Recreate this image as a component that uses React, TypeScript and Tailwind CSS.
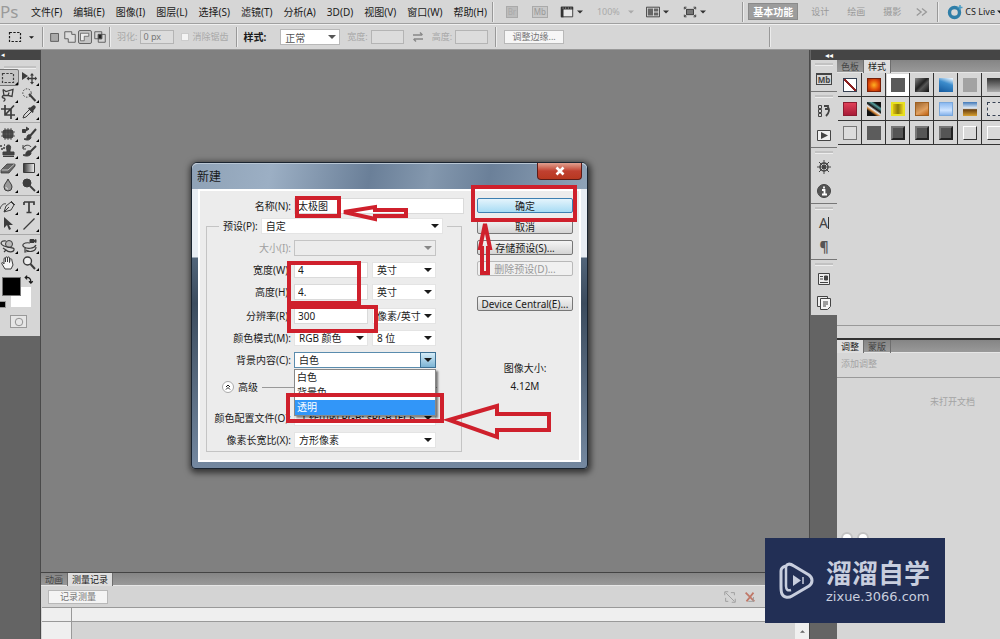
import React from "react";
import clsx from "clsx";

const MENUS = [
  "文件(F)",
  "编辑(E)",
  "图像(I)",
  "图层(L)",
  "选择(S)",
  "滤镜(T)",
  "分析(A)",
  "3D(D)",
  "视图(V)",
  "窗口(W)",
  "帮助(H)",
];

const WORKSPACES = ["设计", "绘画", "摄影"];

const STYLES = [
  "border border-gray-700 bg-[linear-gradient(45deg,#fff_44%,#8c2020_45%,#8c2020_55%,#fff_56%)]",
  "border border-[#7a2008] bg-[radial-gradient(#ffb020,#e04a08_60%,#a02804)]",
  "bg-[#5a5a5a] outline-4 outline-white",
  "bg-[linear-gradient(135deg,#888,#222_45%,#555_60%,#111)]",
  "bg-[linear-gradient(200deg,#e8f4ff_5%,#3c8ccc_40%,#14589c)]",
  "bg-[#a2a2a2]",
  "bg-[linear-gradient(#333,#aaa)]",
  "border border-[#8c1c30] bg-[linear-gradient(#e04058,#a81c38)]",
  "bg-[linear-gradient(35deg,#111_25%,#d08030_35%,#eee_45%,#111_55%,#58a0a0_70%,#111_80%)]",
  "border-2 border-[#e8e020] bg-[linear-gradient(90deg,#e0c010,#8a7a08_50%,#e8d020)]",
  "border border-[#a06020] bg-[linear-gradient(150deg,#a06830,#e0a060_60%,#c06010)]",
  "border border-[#7aa8dc] bg-[linear-gradient(#8ab8f0,#cfe4ff_60%,#88b4ec)]",
  "bg-[linear-gradient(#4078b8,#e8f0f8_45%,#6a4010_55%,#d8a030)]",
  "border border-dashed border-gray-700 bg-[#ddd]",
  "border border-[#777] bg-[#dcdcdc]",
  "bg-[#5c5c5c]",
  "bg-[#555] border-2 border-t-[#777] border-l-[#777] border-b-[#222] border-r-[#222]",
  "bg-[#555] border-2 border-t-[#777] border-l-[#777] border-b-[#222] border-r-[#222]",
  "bg-[#555] border-2 border-t-[#777] border-l-[#777] border-b-[#222] border-r-[#222]",
  "bg-[#dadada] border border-t-white border-l-white border-b-[#333] border-r-[#333]",
  "bg-[#dadada] border border-t-white border-l-white border-b-[#333] border-r-[#333]",
];

type IconProps = { children: React.ReactNode; className?: string };

const Icon = ({ children, className = "size-4" }: IconProps) => (
  <svg
    viewBox="0 0 16 16"
    fill="none"
    stroke="currentColor"
    className={clsx("shrink-0", className)}
    aria-hidden="true"
  >
    {children}
  </svg>
);

const Caret = ({ className = "w-2 h-1" }: { className?: string }) => (
  <svg viewBox="0 0 8 4" className={clsx("shrink-0 fill-current", className)}>
    <path d="M0 0h8L4 4z" />
  </svg>
);

const MarqueeIcon = () => (
  <Icon>
    <path d="M2.5 3.5h11v9h-11z" strokeDasharray="2.4 1.4" strokeWidth="1.2" />
  </Icon>
);

const TOOL_GROUPS: { name: string; icon: React.ReactNode; active?: boolean }[][] = [
  [
    { name: "矩形选框工具", icon: <MarqueeIcon />, active: true },
    {
      name: "移动工具",
      icon: (
        <Icon>
          <path d="M1 2v8l6-4z" fill="currentColor" stroke="none" />
          <path d="M11 4v9M6.5 8.5h9" strokeWidth="1.3" />
          <path d="M11 3l2 2.500h-4zM11 14.500l2-2.500h-4zM5.500 8.500L8 6.500v4zM16 8.500l-2-2v4z" fill="currentColor" stroke="none" />
        </Icon>
      ),
    },
    {
      name: "套索工具",
      icon: (
        <Icon>
          <path d="M3 2.500l3 2 7-2-1 7-4-1 1-3M3 2.500l1 6 4 0M4 8.500c-2 0-2.500 2-.5 2.500s2 2 0 3.500" strokeWidth="1.3" />
        </Icon>
      ),
    },
    {
      name: "快速选择工具",
      icon: (
        <Icon>
          <circle cx="6" cy="6" r="4.2" strokeDasharray="1.5 1.5" />
          <path d="M8 7l6.500 7" strokeWidth="2" />
        </Icon>
      ),
    },
    {
      name: "裁剪工具",
      icon: (
        <Icon>
          <path d="M5 1v10h10M1 5h10v10M5 11l9-9.500" strokeWidth="1.7" />
        </Icon>
      ),
    },
    {
      name: "吸管工具",
      icon: (
        <Icon>
          <path d="M2 14l1-3 6-6 2 2-6 6z" />
          <path d="M8 3.500l1.500 0L12 1.500c1.500-1 3.500 1 2.500 2.500L12.500 6.500v1.500l-1 1L7 4.500z" fill="currentColor" stroke="none" />
        </Icon>
      ),
    },
  ],
  [
    {
      name: "修复工具",
      icon: (
        <Icon>
          <rect x="3" y="4" width="10" height="8" rx="2" fill="#555" />
          <path d="M5 2v12M8 2v12M11 2v12M1 6h14M1 10h14" strokeWidth="0.8" />
        </Icon>
      ),
    },
    {
      name: "画笔工具",
      icon: (
        <Icon>
          <path d="M1.500 3.500h3v3h-3zM5 1l3 2-3 2" fill="currentColor" />
          <path d="M15 3l-6 7" strokeWidth="2" />
          <path d="M9 9c-2-1-3 1-3 2s-1 2-3 2c3 2 7 1 7-2z" fill="currentColor" />
        </Icon>
      ),
    },
    {
      name: "仿制图章工具",
      icon: (
        <Icon>
          <path d="M7 7c-1-2-1-5 1.500-5S11 5 10 7v2h4v3H3V9h4zM3 13.500h11" fill="#444" />
          <path d="M0 3h2M3 5h2M1 6h2M4 2h1" strokeWidth="1.5" />
        </Icon>
      ),
    },
    {
      name: "历史画笔工具",
      icon: (
        <Icon>
          <path d="M2 5c2-4 7-3 8-1M2 2v4h3" />
          <path d="M15 3l-6 6" strokeWidth="2" />
          <path d="M9 8c-2-1-4 1-4 2s-1 2-3 2c3 2 8 1 8-2z" fill="currentColor" />
        </Icon>
      ),
    },
    {
      name: "橡皮擦工具",
      icon: (
        <Icon>
          <path d="M1 10l6-6h8v2l-6 7H1z" fill="#666" strokeWidth="0.8" />
          <path d="M1.500 10H8l6.500-6" stroke="#ddd" strokeWidth="0.8" />
        </Icon>
      ),
    },
    {
      name: "渐变工具",
      icon: (
        <Icon>
          <defs>
            <linearGradient id="toolGradient">
              <stop offset="0" stopColor="#333" />
              <stop offset="1" stopColor="#f4f4f4" />
            </linearGradient>
          </defs>
          <path d="M2.500 3.500h11v9h-11z" fill="url(#toolGradient)" />
        </Icon>
      ),
    },
    {
      name: "模糊工具",
      icon: (
        <Icon>
          <path d="M8 2c1 3 4 5 4 8a4 4 0 0 1-8 0c0-3 3-5 4-8z" fill="#999" />
          <path d="M6 10c0 1 1 2 2 2" stroke="#eee" />
        </Icon>
      ),
    },
    {
      name: "减淡工具",
      icon: (
        <Icon>
          <circle cx="6" cy="6" r="4" fill="currentColor" />
          <path d="M9 9l5 5" strokeWidth="1.8" />
        </Icon>
      ),
    },
  ],
  [
    {
      name: "钢笔工具",
      icon: (
        <Icon>
          <path d="M4 13l2-6 5-4 3 3-3 5zM4 13l5-5M0 10c1-4 4-6 6-5M11 2l4 4" />
        </Icon>
      ),
    },
    {
      name: "文字工具",
      icon: (
        <Icon>
          <path d="M3 3h10v3M3 3v3M8 3v10.500M5.500 13.500h5" strokeWidth="1.7" />
        </Icon>
      ),
    },
    {
      name: "路径选择工具",
      icon: (
        <Icon>
          <path d="M4 1v11l3-3 2 5 2-1-2-4h4z" fill="currentColor" stroke="none" />
        </Icon>
      ),
    },
    {
      name: "直线工具",
      icon: (
        <Icon>
          <path d="M2.500 13.500l11-11" strokeWidth="1.3" />
        </Icon>
      ),
    },
  ],
  [
    {
      name: "3D 旋转工具",
      icon: (
        <Icon>
          <circle cx="9" cy="6" r="3.5" fill="#bbb" />
          <path d="M6 3c-5-1-7 3-2 5s11 1 10 4-6 2-8 0M3 10l3 2-2 2" strokeWidth="1.2" />
        </Icon>
      ),
    },
    {
      name: "3D 相机工具",
      icon: (
        <Icon>
          <path d="M9 1.500h4v3H9zM13 3l2-1.500v3z" fill="currentColor" />
          <path d="M9 5C3 4 0 7 3 9s10 2 12-2M15 9c0 4-6 6-10 3M4 10v4l4-1" strokeWidth="1.2" />
        </Icon>
      ),
    },
    {
      name: "抓手工具",
      icon: (
        <Icon>
          <path
            d="M5 14L2 9c-1-2 1-2 2 0V4c0-1.500 1.500-1.500 1.500 0v3V3c0-1.500 2-1.500 2 0v4-4c0-1.500 2-1.500 2 0v4.500l.5-3c0-1.500 2-1 1.800.5L13 10l-2 4z"
            fill="#f4f4f4"
          />
        </Icon>
      ),
    },
    {
      name: "缩放工具",
      icon: (
        <Icon>
          <circle cx="6.5" cy="6" r="4" fill="#eee" strokeWidth="1.4" />
          <path d="M9.500 9l4.500 5" strokeWidth="2" />
        </Icon>
      ),
    },
  ],
];

const MbIcon = () => (
  <span className="flex items-center justify-center w-4 h-3 text-[8px] leading-3 font-bold border border-current border-t-2">
    Mb
  </span>
);

const DOCK_GROUPS: { name: string; icon: React.ReactNode }[][] = [
  [{ name: "Mini Bridge", icon: <MbIcon /> }],
  [
    {
      name: "历史记录",
      icon: (
        <Icon>
          <path d="M2.500 2.500h3v3h-3zM2.500 6.500h3v3h-3zM2.500 10.500h3v3h-3z" />
          <path d="M8 3h4v3H9M12 4c2 3 1 6-2 9" strokeWidth="1.8" />
        </Icon>
      ),
    },
    {
      name: "动作",
      icon: (
        <Icon>
          <path d="M1.500 3.500h13v10h-13z" fill="#f0f0f0" />
          <path d="M5 5l7 3.500L5 12z" fill="currentColor" stroke="none" />
        </Icon>
      ),
    },
  ],
  [
    {
      name: "导航器",
      icon: (
        <Icon>
          <circle cx="8" cy="8" r="4" strokeWidth="1.5" />
          <path d="M8 1v14M1 8h14M3 3l10 10M13 3L3 13" />
          <circle cx="8" cy="8" r="1.5" fill="currentColor" />
        </Icon>
      ),
    },
    {
      name: "信息",
      icon: (
        <Icon>
          <circle cx="8" cy="8" r="6.5" fill="#555" />
          <path d="M6 7h2.500v4.500M6 11.500h5M8 3.500v2" stroke="#fff" strokeWidth="1.8" />
        </Icon>
      ),
    },
  ],
  [
    {
      name: "字符",
      icon: (
        <span className="flex items-center text-sm leading-4 text-[#444]">
          A<span className="w-px h-3 bg-[#333]" />
        </span>
      ),
    },
    { name: "段落", icon: <span className="text-sm leading-4 font-bold text-[#555]">¶</span> },
  ],
  [
    {
      name: "图层复合",
      icon: (
        <Icon>
          <path d="M2.500 2.500h11v11h-11z" fill="#eee" />
          <path d="M4 5.500h3M4 8h3M4 11.500h8" strokeWidth="1.2" />
          <path d="M8.500 5h3v4h-3z" fill="currentColor" />
        </Icon>
      ),
    },
    {
      name: "注释",
      icon: (
        <Icon>
          <path d="M1.500 1.500h10v10h-10z" fill="#eee" />
          <path d="M4.500 3.500h10v8l-3 3h-7z" fill="#f6f6f6" />
          <path d="M7 7h5M7 9h5M7 11h3" />
        </Icon>
      ),
    },
  ],
];

const Divider = () => (
  <span className="block w-[2px] h-5 shrink-0 bg-[#999] border-r border-[#ececec]" />
);

const Grip = () => <div className="h-[3px] mx-1 bg-[#c2c2c2] border-b border-[#ededed]" />;

const MenuBar = () => (
  <header className="flex items-center h-6 overflow-hidden whitespace-nowrap border-b border-[#a0a0a0]">
    <span className="w-[31px] shrink-0 text-[17px] leading-5 text-[#9a9a9a]">Ps</span>
    <nav className="flex gap-[11px]">
      {MENUS.map((m) => (
        <button key={m}>{m}</button>
      ))}
    </nav>
    <div className="flex items-center ml-[5px]">
      <Divider />
      <button className="flex items-center justify-center w-3 h-3 ml-3 text-[8px] leading-3 text-[#aaa] bg-[#bcbcbc] border border-[#aaa]">
        Br
      </button>
      <button className="flex items-center justify-center w-4 h-3 ml-3.5 text-[8px] leading-3 text-[#999] bg-[#c8c8c8] border border-[#aaa]">
        Mb
      </button>
      <button aria-label="查看额外内容" className="flex items-center gap-[3px] ml-3 text-[#333]">
        <Icon className="size-3.5">
          <path d="M1.500 2.500h13v11h-13z" fill="#e8e8e8" />
          <path d="M1 3.500h14M2.500 3v11" strokeWidth="3" />
          <path d="M3 3.500h12" stroke="#ddd" strokeDasharray="1 2" />
        </Icon>
        <Caret className="w-1.5 h-1" />
      </button>
      <button className="flex items-center gap-2 ml-3.5 text-[9px] text-[#aaa]">
        100%
        <Caret className="w-1.5 h-1" />
      </button>
      <button aria-label="排列文档" className="flex items-center gap-[3px] ml-3 text-[#333]">
        <Icon className="size-3.5">
          <path d="M.500 2.500h15v11h-15z" fill="#ddd" />
          <path d="M2 4h6v8H2zM9 4h5v3.500H9zM9 8.500h5V12H9z" fill="#666" stroke="none" />
        </Icon>
        <Caret className="w-1.5 h-1" />
      </button>
      <button aria-label="屏幕模式" className="flex items-center gap-[3px] ml-3.5 text-[#333]">
        <Icon className="size-3.5">
          <path d="M4 5h8v6H4z" fill="#777" />
          <path d="M1.500 5V2.500H4M12 2.500h2.500V5M14.500 11v2.500H12M4 13.500H1.500V11M2 3l2 2M14 3l-2 2M14 13l-2-2M2 13l2-2" />
        </Icon>
        <Caret className="w-1.5 h-1" />
      </button>
    </div>
    <div className="flex items-center ml-auto">
      <Divider />
      <button className="h-[17px] w-[50px] ml-1 font-bold text-white bg-[#9c9c9c] border border-[#8a8a8a]">
        基本功能
      </button>
      <div className="flex gap-[18px] ml-[13px] text-[#999]">
        {WORKSPACES.map((w) => (
          <button key={w} className="text-[9px]">
            {w}
          </button>
        ))}
      </div>
      <button aria-label="更多工作区" className="ml-3.5 mr-2 text-[#999]">
        <Icon className="size-3.5">
          <path d="M2 4l5 4-5 4M8 4l5 4-5 4" strokeWidth="1.5" />
        </Icon>
      </button>
      <Divider />
      <button className="flex items-center gap-0.5 ml-2 text-[9px]">
        <Icon>
          <circle cx="7.5" cy="8.5" r="5" stroke="#2f7ea8" strokeWidth="3.4" />
          <path d="M13 1v5M10.500 3.500h5" stroke="#4a9cc4" strokeWidth="1.5" />
        </Icon>
        CS Live
        <Caret className="w-1.5 h-1 -mr-[3px]" />
      </button>
    </div>
  </header>
);

const OptionsBar = () => (
  <div className="flex items-center h-[26px] overflow-hidden whitespace-nowrap border-t border-b border-t-[#f0f0f0] border-b-[#999] text-[9px]">
    <button aria-label="当前工具" className="flex items-center gap-1.5 ml-[7px] mr-2">
      <MarqueeIcon />
      <Caret className="w-[5px] h-[3px]" />
    </button>
    <Divider />
    <div className="flex items-center gap-px w-[61px] ml-1 text-[#555]">
      <button aria-label="新选区">
        <Icon className="size-3.5">
          <path d="M3 4h9v9H3z" fill="#aaa" />
        </Icon>
      </button>
      <button aria-label="添加到选区">
        <Icon className="size-3.5">
          <path d="M2 2h8v3h4v9H6v-4H2z" fill="#ddd" />
        </Icon>
      </button>
      <button aria-label="从选区减去" className="border border-[#666] rounded-xs bg-[#c4c4c4]">
        <Icon className="size-3">
          <path d="M2 3h11v4H7v6H2z" fill="#eee" />
        </Icon>
      </button>
      <button aria-label="与选区交叉">
        <Icon className="size-3.5">
          <path d="M2 2h8v8H2zM6 5h8v9H6z" />
          <path d="M6 5h4v5H6z" fill="#222" />
        </Icon>
      </button>
    </div>
    <Divider />
    <label className="flex items-center gap-[3px] ml-1.5 text-[#a8a8a8]">
      羽化:
      <input
        defaultValue="0 px"
        className="w-[34px] h-3.5 px-0.5 text-[#777] border border-[#b4b4b4] bg-[#dcdcdc]"
      />
    </label>
    <label className="flex items-center gap-[3px] ml-[7px] mr-2 text-[#a8a8a8]">
      <input type="checkbox" className="appearance-none size-2 bg-[#f4f4f4] border border-[#ccc]" />
      消除锯齿
    </label>
    <Divider />
    <label className="flex items-center gap-3.5 ml-[5px] text-[10px]">
      <span className="font-bold">样式:</span>
      <span className="relative flex items-center">
        <select className="appearance-none w-[60px] h-4 px-1 text-[#555] bg-white border border-[#b8b8b8]">
          <option>正常</option>
        </select>
        <Caret className="w-2 h-1 absolute right-1 text-[#555] pointer-events-none" />
      </span>
    </label>
    <label className="flex items-center gap-[3px] ml-[7px] text-[#a8a8a8]">
      宽度:
      <input className="w-[33px] h-3.5 border border-[#b4b4b4] bg-[#dcdcdc]" />
    </label>
    <button aria-label="高度和宽度互换" className="mx-1.5 text-[#888]">
      <Icon>
        <path d="M3 6h9M10 3.500L12.500 6M13 10H4M6 12.500L3.500 10" strokeWidth="1.4" />
      </Icon>
    </button>
    <label className="flex items-center gap-[3px] mr-[7px] text-[#a8a8a8]">
      高度:
      <input className="w-[33px] h-3.5 border border-[#b4b4b4] bg-[#dcdcdc]" />
    </label>
    <Divider />
    <button className="w-[60px] h-3.5 ml-[7px] leading-3 text-[#777] bg-[#f6f6f6] border border-[#b8b8b8]">
      调整边缘...
    </button>
    <div className="ml-auto mr-[229px]">
      <Divider />
    </div>
  </div>
);

const Toolbar = () => (
  <aside className="w-10 shrink-0 overflow-hidden bg-[#646464]">
    <div className="h-2.5 pl-px text-[7px] leading-[10px] text-white bg-[#454545]">◂</div>
    <div className="pt-1.5 pb-2 bg-[#d6d6d6]">
      <Grip />
      {TOOL_GROUPS.map((group, i) => (
        <div key={i}>
          {i > 0 && <div className="h-[3px] mb-0.5 border-b border-[#a8a8a8]" />}
          <div className="grid grid-cols-2 -ml-[2px]">
            {group.map((tool) => (
              <button
                key={tool.name}
                aria-label={tool.name}
                className={clsx(
                  "flex items-center justify-center h-[17px] text-[#3c3c3c]",
                  tool.active && "bg-[#c6c6c6] border border-[#777] rounded-xs"
                )}
              >
                {tool.icon}
                <svg viewBox="0 0 3 3" className="self-end size-[3px] -ml-[1px] fill-black">
                  <path d="M3 0v3H0z" />
                </svg>
              </button>
            ))}
          </div>
        </div>
      ))}
      <div className="relative h-8 mt-1.5">
        <div className="absolute left-[11px] top-2.5 size-5 bg-white" />
        <div className="absolute left-[2px] top-0 size-[19px] bg-black border border-[#777]" />
        <Icon className="size-2.5 absolute left-6 -top-0.5">
          <path d="M3 4c5-1 8 2 8 7M5 1L2 4l3 3M8 10l3 3 3-3" strokeWidth="2" />
        </Icon>
        <div className="absolute left-0 bottom-0.5 w-[5px] h-[5px] bg-black outline outline-[#999]" />
      </div>
      <button
        aria-label="以快速蒙版模式编辑"
        className="flex items-center justify-center w-[17px] h-[13px] mt-1.5 ml-2.5 bg-[#e6e6e6] border border-[#999] text-[#777]"
      >
        <Icon className="size-3">
          <circle cx="8" cy="8" r="5" />
        </Icon>
      </button>
    </div>
  </aside>
);

const Dock = () => (
  <aside className="w-7 shrink-0 pl-px bg-[#646464] border-l border-[#4a4a4a]">
    <div className="h-2.5 pr-1 text-[8px] leading-[10px] text-right text-white bg-[#454545]">◂◂</div>
    {DOCK_GROUPS.map((group, i) => (
      <div key={i} className="pt-[3px] bg-[#d6d6d6] border-b border-[#777] last:border-b-0">
        <Grip />
        <div className="flex flex-col pt-px">
          {group.map((p) => (
            <button
              key={p.name}
              aria-label={p.name}
              className="flex items-center justify-center h-6 text-[#444]"
            >
              {p.icon}
            </button>
          ))}
        </div>
      </div>
    ))}
  </aside>
);

const Tabs = ({ items, active }: { items: string[]; active: string }) => (
  <div
    role="tablist"
    className="flex h-[13px] text-[9px] leading-3 bg-linear-to-b from-[#858585] to-[#999] border-b border-[#e6e6e6]"
  >
    {items.map((t) => (
      <button
        key={t}
        role="tab"
        aria-selected={t === active}
        className={clsx(
          "h-[13px] px-1 border-r border-[#6e6e6e]",
          t === active ? "bg-[#dedede] text-[#222]" : "text-[#444]"
        )}
      >
        {t}
      </button>
    ))}
  </div>
);

const Panels = () => (
  <aside className="flex flex-col w-[163px] shrink-0 overflow-hidden bg-[#d6d6d6]">
    <div className="h-2.5 shrink-0 bg-[#454545]" />
    <section className="flex flex-col h-[278px] pb-3 shrink-0">
      <Tabs items={["色板", "样式"]} active="样式" />
      <div className="flex-1 overflow-hidden border-b border-[#999]">
        <div className="grid grid-cols-[repeat(7,24px)] ml-px">
          {STYLES.map((s, i) => (
            <div
              key={i}
              className="flex items-center justify-center h-6 border-r border-b border-[#333]"
            >
              <span className={clsx("size-3.5", s)} />
            </div>
          ))}
        </div>
      </div>
    </section>
    <section className="flex-1 border-t-2 border-[#333]">
      <Tabs items={["调整", "蒙版"]} active="调整" />
      <p className="h-[25px] pl-1 text-[9px] leading-[22px] text-[#a4a4a4] border-b border-[#999]">
        添加调整
      </p>
      <p className="pl-[93px] mt-4 text-[9px] leading-4 text-[#a4a4a4]">未打开文档</p>
      <div className="flex gap-1 mt-[122px] pl-1">
        <span className="size-3 bg-white border-2 border-[#c2c2c2] rounded-full" />
        <span className="size-3 bg-white border-2 border-[#c2c2c2] rounded-full" />
      </div>
    </section>
  </aside>
);

const MeasurementPanel = () => (
  <section className="h-[67px] flex flex-col bg-[#d4d4d4] border-t border-[#444]">
    <Tabs items={["动画", "测量记录"]} active="测量记录" />
    <div className="flex items-center h-[21px] px-2 shrink-0">
      <button className="w-[60px] h-3.5 -ml-px text-[9px] leading-3 text-[#777] bg-[#f4f4f4] border border-[#b8b8b8]">
        记录测量
      </button>
      <div className="flex gap-1.5 ml-auto mr-11">
        <button aria-label="取消选择" className="text-[#999]">
          <Icon className="size-3.5">
            <path d="M3 3l10 10M2 6V2h4M14 10v4h-4M9 3h4v3M3 9v4h3" />
          </Icon>
        </button>
        <button aria-label="删除测量" className="text-[#c07868]">
          <Icon className="size-3.5">
            <path d="M3 3l10 10M12 3L4 13" strokeWidth="2" />
            <path d="M12 8v5H6" stroke="#999" />
          </Icon>
        </button>
      </div>
    </div>
    <div className="flex h-[15px] shrink-0 ml-px bg-[#efefef] border-t border-b border-[#999]">
      <div className="w-[30px] border-r border-[#999]" />
    </div>
    <div className="flex flex-1 ml-px">
      <div className="w-[30px] bg-[#efefef] border-r border-[#999]" />
      <div className="flex justify-center w-[14px] ml-auto pt-2 bg-[#efefef] text-[#666]">
        <Caret className="w-[5px] h-[3px] rotate-180" />
      </div>
    </div>
  </section>
);

type SelectProps = {
  id: string;
  value: string;
  className?: string;
  disabled?: boolean;
  open?: boolean;
};

const Select = ({ id, value, className, disabled, open }: SelectProps) => (
  <span className={clsx("relative flex items-center", className)}>
    <select
      id={id}
      disabled={disabled}
      className={clsx(
        "appearance-none w-full h-4 pl-1 pr-3 leading-3 border",
        disabled ? "bg-[#ececec] border-[#c4c4c4]" : "bg-white",
        open ? "border-[#5a8cae]" : !disabled && "border-[#e4e4e4]"
      )}
    >
      <option>{value}</option>
    </select>
    <span
      className={clsx(
        "absolute right-0 flex items-center justify-center w-4 h-4 pointer-events-none",
        disabled && "text-[#888]",
        open && "bg-linear-to-b from-[#d4ecf8] to-[#7cb4d4] border border-[#3c7094]"
      )}
    >
      <Caret />
    </span>
  </span>
);

type RowProps = { id: string; label: string; muted?: boolean; children: React.ReactNode };

const Row = ({ id, label, muted, children }: RowProps) => (
  <div className="flex items-center h-[22px]">
    <label
      htmlFor={id}
      className={clsx("w-[84px] mr-[3px] text-right whitespace-nowrap", muted && "text-[#a0a0a0]")}
    >
      {label}
    </label>
    {children}
  </div>
);

const NumberField = ({ id, value }: { id: string; value: string }) => (
  <input
    id={id}
    defaultValue={value}
    className="w-[74px] h-4 px-[3px] mr-1 bg-white border border-[#dadada]"
  />
);

const dialogButton =
  "h-[15px] leading-3 bg-linear-to-b from-[#f4f4f4] to-[#d4d4d4] border border-[#777] rounded-xs";

// Outlines drawn on top of the dialog, in the dialog's own coordinates
const Annotations = () => (
  <svg
    viewBox="0 0 397 306"
    width="397"
    height="306"
    fill="none"
    stroke="#cf202c"
    strokeWidth="4"
    className="absolute -left-px -top-px z-20 pointer-events-none"
  >
    <path d="M106 36h42v18h-42z" />
    <path d="M98 101h70v40H98z" />
    <path d="M98 145h87v24H98z" />
    <path d="M97 233h154v26H97z" />
    <path d="M282 25h102v33H282z" />
    <g strokeWidth="4">
      <path d="M153 50l31-5v3h31v6h-31v3z" />
      <path d="M294 62l5 24h-2v25h-6V86h-2z" />
    </g>
    <path d="M258 258l48-14v8h52v16h-52v7z" />
  </svg>
);

const NewDocumentDialog = () => (
  <div
    role="dialog"
    aria-label="新建"
    className="absolute left-[191px] top-[162px] w-[397px] text-[10px] rounded-t-md rounded-b-sm border border-[#1a2430] bg-[linear-gradient(#e8edf3_35px,#e8edf3_94px,#52657a_95px,#3c4c5e_140px,#7488a0)] shadow-[1px_2px_6px_2px_rgba(0,0,0,0.6)]"
  >
    <div className="flex items-start h-[26px] pl-[5px] pr-[5px] rounded-t-md bg-[linear-gradient(100deg,#8fa2b6,#9cafc4_20%,#6a7f98_45%,#8498ae_60%,#6b8099_75%,#8fa3b8)] border-t border-[#b8c6d4]">
      <h1 className="text-[12px] leading-[26px]">新建</h1>
      <button
        aria-label="关闭"
        className="flex items-center justify-center w-[45px] h-[17px] ml-auto -mt-px text-white bg-linear-to-b from-[#e0a090] via-[#c04030] to-[#b83820] border border-t-0 border-[#5c1c18] rounded-b-sm"
      >
        <Icon className="size-3.5">
          <path d="M4 4l8 8M12 4l-8 8" strokeWidth="3" />
        </Icon>
      </button>
    </div>
    <form className="flex mx-1.5 mb-1.5 pt-1 pb-2 pl-1.5 pr-[5px] bg-[#ececec] border-2 border-white">
      <div className="w-[258px]">
        <div className="flex items-center h-[22px]">
          <label htmlFor="docName" className="w-[85px] mr-[3px] text-right">
            名称(N):
          </label>
          <input
            id="docName"
            defaultValue="太极图"
            className="flex-1 min-w-0 h-4 px-[3px] bg-white border border-[#dadada]"
          />
        </div>
        <fieldset className="min-w-0 mt-px mr-0.5 border border-[#c4c4c4]">
          <legend className="flex items-center h-4 ml-3 px-1">
            <label htmlFor="preset" className="mr-[3px]">
              预设(P):
            </label>
            <Select id="preset" value="自定" className="w-[182px]" />
          </legend>
          <div className="pt-[3px] pb-0.5">
            <Row id="size" label="大小(I):" muted>
              <Select id="size" value="" disabled className="w-[142px]" />
            </Row>
            <Row id="docWidth" label="宽度(W):">
              <NumberField id="docWidth" value="4" />
              <Select id="widthUnit" value="英寸" className="w-16" />
            </Row>
            <Row id="docHeight" label="高度(H):">
              <NumberField id="docHeight" value="4." />
              <Select id="heightUnit" value="英寸" className="w-16" />
            </Row>
          </div>
          <Row id="resolution" label="分辨率(R):">
            <NumberField id="resolution" value="300" />
            <Select id="resolutionUnit" value="像素/英寸" className="w-16" />
          </Row>
          <Row id="colorMode" label="颜色模式(M):">
            <Select id="colorMode" value="RGB 颜色" className="w-[74px] mr-1" />
            <Select id="bitDepth" value="8 位" className="w-16" />
          </Row>
          <div className="relative">
            <Row id="background" label="背景内容(C):">
              <Select id="background" value="白色" open className="w-[142px]" />
            </Row>
            <ul
              role="listbox"
              className="absolute left-[87px] top-5 z-10 w-[142px] bg-white border border-[#888] shadow-[2px_2px_2px_rgba(0,0,0,0.5)]"
            >
              {["白色", "背景色", "透明"].map((o) => (
                <li
                  key={o}
                  role="option"
                  aria-selected={o === "透明"}
                  className={clsx(
                    "h-[15px] pl-0.5 leading-[15px]",
                    o === "透明" && "text-white bg-[#3296f8]"
                  )}
                >
                  {o}
                </li>
              ))}
            </ul>
          </div>
          <div className="flex items-center gap-1 h-8 pl-[15px]">
            <button
              type="button"
              aria-label="收起高级选项"
              className="flex items-center justify-center size-3 bg-white border border-[#aaa] rounded-full"
            >
              <Icon className="size-2">
                <path d="M4 8l4-4 4 4M4 13l4-4 4 4" strokeWidth="2" />
              </Icon>
            </button>
            高级
            <span className="flex-1 h-px mr-6 bg-[#999]" />
          </div>
          <div className="pt-1">
            <Row id="profile" label="颜色配置文件(O):">
              <Select id="profile" value="工作中的 RGB: sRGB IEC6" className="w-[142px]" />
            </Row>
            <Row id="pixelRatio" label="像素长宽比(X):">
              <Select id="pixelRatio" value="方形像素" className="w-[142px]" />
            </Row>
          </div>
        </fieldset>
      </div>
      <div className="flex flex-col gap-1.5 w-24 ml-[13px] pt-[3px]">
        <button
          type="button"
          className="h-[15px] leading-3 bg-linear-to-b from-[#e4f4fc] to-[#a8dcf4] border border-[#3c7fb1] rounded-xs"
        >
          确定
        </button>
        <button type="button" className={dialogButton}>
          取消
        </button>
        <button type="button" className={dialogButton}>
          存储预设(S)...
        </button>
        <button
          type="button"
          disabled
          className="h-[15px] leading-3 text-[#999] bg-[#f0f0f0] border border-[#b8b8b8] rounded-xs"
        >
          删除预设(D)...
        </button>
        <button type="button" className={clsx(dialogButton, "mt-3.5")}>
          Device Central(E)...
        </button>
        <div className="mt-[42px] text-center leading-[18px]">
          <p>图像大小:</p>
          <p>4.12M</p>
        </div>
      </div>
    </form>
    <Annotations />
  </div>
);

const Watermark = () => (
  <div className="absolute right-[55px] bottom-4 flex items-center w-[180px] h-[85px] pl-[13px] gap-3 text-[#c8cede] bg-[#222f55]">
    <svg viewBox="0 0 36 38" className="w-9 h-[38px] shrink-0" fill="none" stroke="currentColor">
      <path
        d="M8 4C10 1 13 2 16 4l15 9c4 3 4 8 0 11L14 34c-3 2-8 2-10-2-1-2-1-4-1-8V9c0-2 1-4 5-5"
        strokeWidth="3"
      />
      <path d="M8 4v20c0 4 2 5 5 4" strokeWidth="2.5" />
      <path d="M15 13l8 5.500-8 5.500z" fill="currentColor" stroke="none" />
      <path d="M25 15v7" strokeWidth="1.5" />
    </svg>
    <div className="flex flex-col">
      <p className="h-8 text-[26px] leading-8 font-bold">溜溜自学</p>
      <p className="text-[13px] leading-4 font-['DejaVu_Sans']">zixue.3066.com</p>
    </div>
  </div>
);

const App: React.FC = () => {
  return (
    <div className="relative flex flex-col h-screen overflow-hidden bg-[#d6d6d6] text-[10px] leading-4 text-[#1a1a1a] font-['Noto_Sans','Noto_Sans_CJK_SC',sans-serif]">
      <MenuBar />
      <OptionsBar />
      <div className="flex flex-1 min-h-0">
        <Toolbar />
        <div className="flex flex-col flex-1 min-w-0 border-l border-[#4a4a4a]">
          <main className="flex-1 bg-[#808080]" />
          <MeasurementPanel />
        </div>
        <Dock />
        <Panels />
      </div>
      <NewDocumentDialog />
      <Watermark />
    </div>
  );
};

export default App;
